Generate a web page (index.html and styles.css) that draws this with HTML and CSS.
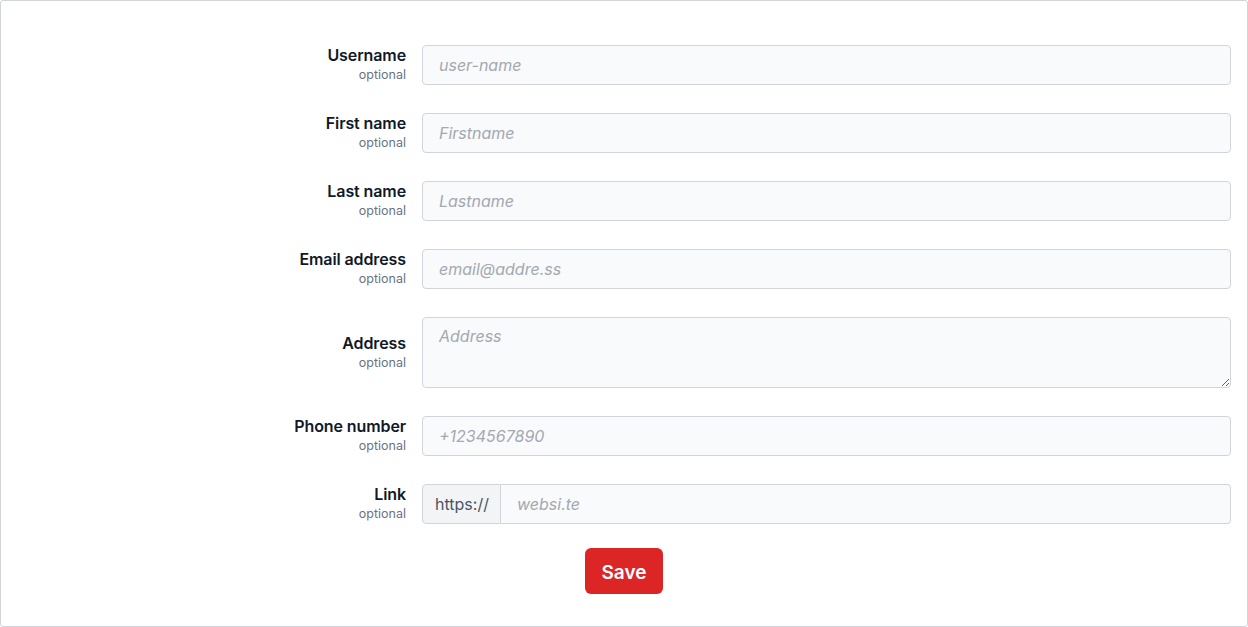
FILE: index.html
```html
<!DOCTYPE html>
<html>
<head>
<meta charset="utf-8">
<link rel="stylesheet" href="styles.css">
</head>
<body>
<form class="card">
  <div class="row">
    <div class="label"><span class="name">Username</span><span class="opt">optional</span></div>
    <input class="field" type="text" placeholder="user-name">
  </div>
  <div class="row">
    <div class="label"><span class="name">First name</span><span class="opt">optional</span></div>
    <input class="field" type="text" placeholder="Firstname">
  </div>
  <div class="row">
    <div class="label"><span class="name">Last name</span><span class="opt">optional</span></div>
    <input class="field" type="text" placeholder="Lastname">
  </div>
  <div class="row">
    <div class="label"><span class="name">Email address</span><span class="opt">optional</span></div>
    <input class="field" type="text" placeholder="email@addre.ss">
  </div>
  <div class="row">
    <div class="label"><span class="name">Address</span><span class="opt">optional</span></div>
    <textarea class="field area" placeholder="Address"></textarea>
  </div>
  <div class="row">
    <div class="label"><span class="name">Phone number</span><span class="opt">optional</span></div>
    <input class="field" type="text" placeholder="+1234567890">
  </div>
  <div class="row">
    <div class="label"><span class="name">Link</span><span class="opt">optional</span></div>
    <div class="group">
      <span class="prefix">https://</span>
      <input class="field joined" type="text" placeholder="websi.te">
    </div>
  </div>
  <div class="actions">
    <button class="save" type="button">Save</button>
  </div>
</form>
</body>
</html>
```

FILE: styles.css
```css
* { box-sizing: border-box; }
html, body { margin: 0; padding: 0; background: #fff; }
body { font-family: Inter, "Noto Sans", sans-serif; color: #111827; }

.card {
  width: 1248px;
  height: 627px;
  border: 1px solid #d1d5db;
  border-radius: 3px;
  padding: 44px 16px 0 16px;
  display: flex;
  flex-direction: column;
  gap: 28px;
}

.row {
  display: flex;
  align-items: center;
  gap: 16px;
}

.label {
  width: 389px;
  flex: none;
  display: flex;
  flex-direction: column;
  align-items: flex-end;
  text-align: right;
}
.name {
  font-size: 16px;
  font-weight: 600;
  line-height: 20px;
  color: #111827;
  letter-spacing: -0.1px;
}
.opt {
  font-size: 12.5px;
  line-height: 20px;
  color: #6b7280;
}

.field {
  flex: 1;
  height: 40px;
  margin: 0;
  border: 1px solid #d1d5db;
  border-radius: 4px;
  background: #f9fafb;
  padding: 0 16px;
  font-family: Inter, "Noto Sans", sans-serif;
  font-size: 16px;
  color: #111827;
  outline: none;
}
.field::placeholder {
  color: #a3a8b1;
  font-style: italic;
}
.area {
  display: block;
  height: 71px;
  padding-top: 8px;
  resize: vertical;
  line-height: 20px;
}

.group {
  flex: 1;
  display: flex;
  height: 40px;
}
.prefix {
  width: 79px;
  flex: none;
  display: flex;
  align-items: center;
  padding-left: 12px;
  background: #f3f4f6;
  border: 1px solid #d1d5db;
  border-radius: 4px 0 0 4px;
  font-size: 16px;
  color: #4b5563;
}
.joined {
  border-left: none;
  border-radius: 0 4px 4px 0;
}

.actions {
  display: flex;
  justify-content: center;
  margin-top: -4px;
}
.save {
  height: 46px;
  width: 78px;
  border: none;
  border-radius: 6px;
  background: #dc2626;
  color: #fff;
  font-family: Inter, "Noto Sans", sans-serif;
  font-size: 19px;
  font-weight: 600;
  padding: 2px 0 0 0;
  cursor: pointer;
}
```
